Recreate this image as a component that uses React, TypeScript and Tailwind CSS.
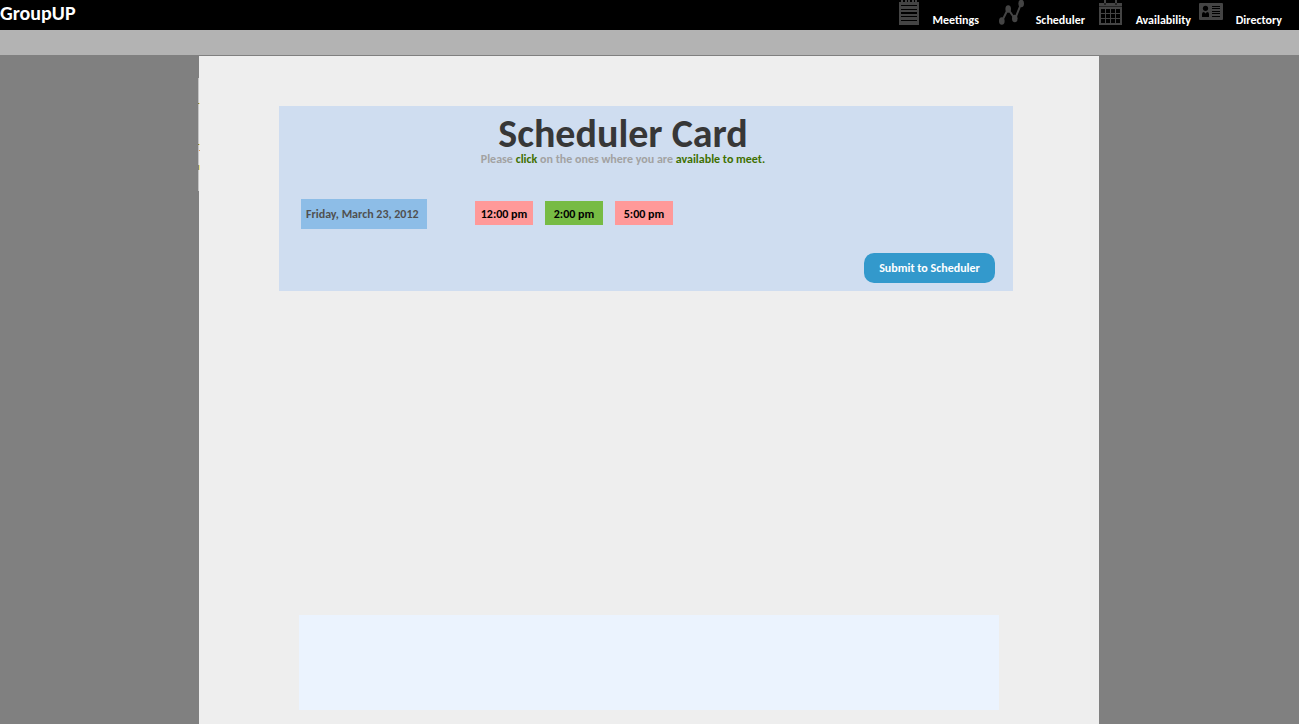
import { useState } from "react";
import type { ReactNode } from "react";

function NotepadIcon() {
  return (
    <svg className="h-[25px] w-5" viewBox="0 0 20 25" fill="#444" aria-hidden="true" shapeRendering="crispEdges">
      <path d="M2 0h2v2H2zM6 0h2v2H6zM9 0h2v2H9zM13 0h2v2h-2zM16 0h2v2h-2z" />
      <path d="M0 2h20v23H0z" />
      <path d="M2 5h16v1H2zM2 9h16v1H2zM2 12h16v2H2zM2 16h16v1H2zM2 20h16v1H2z" fill="#000" />
    </svg>
  );
}

function GraphIcon() {
  return (
    <svg className="h-[25px] w-[25px]" viewBox="0 0 25 25" fill="#444" stroke="#444" aria-hidden="true">
      <path d="M3 21 9 9l7 10 6-15" fill="none" strokeWidth="2" />
      <g stroke="none">
        <ellipse cx="2.800" cy="21" rx="2.800" ry="3.800" />
        <ellipse cx="9.200" cy="9" rx="2.800" ry="3.800" />
        <ellipse cx="15.800" cy="18.500" rx="2.800" ry="3.800" />
        <ellipse cx="22.200" cy="3.500" rx="2.800" ry="3.800" />
      </g>
    </svg>
  );
}

function CalendarIcon() {
  return (
    <svg className="h-[25px] w-6" viewBox="0 0 24 25" aria-hidden="true" shapeRendering="crispEdges">
      <path d="M0 3h23v22H0z" fill="#444" />
      <path d="M5 0h2v3H5zM16 0h2v3h-2z" fill="#444" />
      <path d="M5 3h2v2H5zM16 3h2v2h-2zM0 6h23v1H0z" fill="#222" />
      <path d="M2 9h4v4H2zM7 9h4v4H7zM12 9h4v4h-4zM17 9h4v4h-4zM2 14h4v4H2zM7 14h4v4H7zM12 14h4v4h-4zM17 14h4v4h-4zM2 19h4v4H2zM7 19h4v4H7zM12 19h4v4h-4zM17 19h4v4h-4z" fill="#000" />
    </svg>
  );
}

function ContactCardIcon() {
  return (
    <svg className="h-6 w-6" viewBox="0 0 24 24" aria-hidden="true">
      <rect y="3" width="24" height="17" rx="1" fill="#444" />
      <circle cx="6.500" cy="8.300" r="2.600" fill="#000" />
      <path d="M3 17v-3q0-2 2-2l1.500 1.500L8 12q2 0 2 2v3z" fill="#000" />
      <path d="M13 6h8v1h-8zM13 8h8v1h-8zM13 11h8v1h-8zM13 13h8v1h-8zM13 16h8v1h-8z" fill="#000" />
    </svg>
  );
}

function NavLink({ icon, label, width }: { icon: ReactNode; label: string; width: string }) {
  return (
    <a href="#" className={`flex h-full items-start ${width}`}>
      <span className="w-6 shrink-0">{icon}</span>
      <span className="ml-auto pt-3 text-xs text-white">{label}</span>
    </a>
  );
}

function TimeSlot({ time, initial }: { time: string; initial: boolean }) {
  const [available, setAvailable] = useState(initial);
  return (
    <button
      type="button"
      aria-pressed={available}
      onClick={() => setAvailable(!available)}
      className={`h-6 w-[58px] pt-0.5 text-center text-xs font-bold text-black ${available ? "bg-[#77bb44]" : "bg-[#ff9999]"}`}
    >
      {time}
    </button>
  );
}

function EdgeStrip() {
  return (
    <svg
      className="absolute top-[22px] -left-px h-[113px] w-0.5"
      viewBox="0 0 2 113"
      aria-hidden="true"
      shapeRendering="crispEdges"
    >
      <path d="M0 0h1v113H0z" fill="#c4c4c4" />
      <path d="M0 25h1v1H0zM0 66h1v1H0z" fill="#7a7440" />
      <path d="M0 87h1v5H0z" fill="#808080" />
      <path d="M1 25h1v1H1zM1 66h1v1H1zM1 87h1v5H1z" fill="#e8e490" />
      <path d="M1 72h1v1H1z" fill="#e09a50" />
    </svg>
  );
}

export default function App() {
  return (
    <div className="flex min-h-screen flex-col border-r border-white bg-[#808080] font-['Carlito','Lato',sans-serif] font-bold">
      <header>
        <div className="flex h-[30px] items-start justify-between bg-black pr-[17px]">
          <a href="#" className="text-xl leading-[26px] text-white">GroupUP</a>
          <nav className="flex h-full">
            <NavLink icon={<NotepadIcon />} label="Meetings" width="w-20 mr-5" />
            <NavLink icon={<GraphIcon />} label="Scheduler" width="w-[86px] mr-3.5" />
            <NavLink icon={<CalendarIcon />} label="Availability" width="w-[92px] mr-2" />
            <NavLink icon={<ContactCardIcon />} label="Directory" width="w-[83px]" />
          </nav>
        </div>
        <div className="h-[25px] bg-[#b3b3b3]" />
      </header>
      <div className="flex grow justify-center pt-px pr-px">
        <main className="relative flex w-full max-w-[900px] flex-col bg-[#eeeeee] pt-[50px] pb-3.5">
          <EdgeStrip />
          <section className="ml-20 mr-[86px] bg-[#cfddf0] pt-[9px] pb-2">
            <div className="mr-[46px] text-center">
              <h1 className="text-[40px] leading-[38px] text-[#373737]">Scheduler Card</h1>
              <p className="text-xs leading-3 text-[#a2a2a2]">
                Please <span className="text-[#407000]">click</span> on the ones where you are{" "}
                <span className="text-[#407000]">available to meet.</span>
              </p>
            </div>
            <div className="mt-[34px] ml-[22px] flex items-start">
              <div className="mr-12 flex h-[30px] w-[126px] items-center bg-[#8dbde7] pl-[5px] text-xs text-[#505050]">
                Friday, March 23, 2012
              </div>
              <div className="flex gap-3 pt-0.5">
                <TimeSlot time="12:00 pm" initial={false} />
                <TimeSlot time="2:00 pm" initial={true} />
                <TimeSlot time="5:00 pm" initial={false} />
              </div>
            </div>
            <div className="mt-6 mr-[18px] flex justify-end">
              <button type="button" className="h-[30px] w-[131px] rounded-[10px] bg-[#3399cc] text-xs font-bold text-white">
                Submit to Scheduler
              </button>
            </div>
          </section>
          <footer className="mx-[100px] mt-auto h-[95px] bg-[#ebf3fe]" />
        </main>
      </div>
    </div>
  );
}
